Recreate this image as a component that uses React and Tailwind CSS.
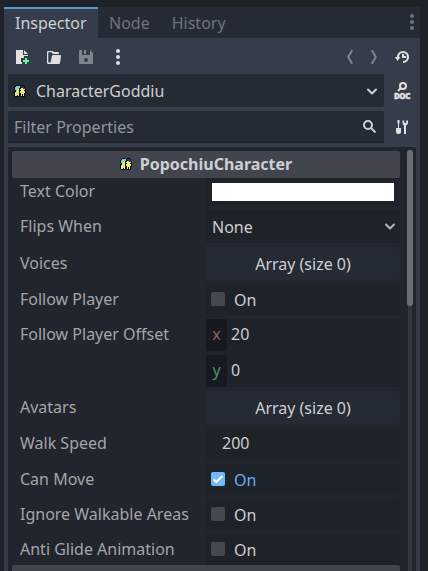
const CHARACTER_PIXELS = [
  "..kkk..kkk..",
  ".kcccckbbbk.",
  "kccccckkbbk.",
  "kcccykkyybbk",
  "kccyykyyyyyk",
  ".kcyykkyyykk",
  "kkyyykyyyyyk",
  "kcyyykyyyyyk",
  "kyycykkyyykk",
  "kyyyykkykyk.",
  "kyykykkykyk.",
  ".kkkk.kkkkk.",
];
const PIXEL_COLORS = { k: "#0b0d12", c: "#76d3cf", y: "#f3ec68", b: "#2a2fa5" };

function CharacterIcon() {
  return (
    <svg width="12" height="12" viewBox="0 0 12 12" shapeRendering="crispEdges" className="shrink-0">
      {CHARACTER_PIXELS.flatMap((line, y) =>
        [...line].map((c, x) =>
          c === "." ? null : <rect key={`${x}-${y}`} x={x} y={y} width="1" height="1" fill={PIXEL_COLORS[c]} />
        )
      )}
    </svg>
  );
}

function Icon({ children, className = "" }) {
  return (
    <svg width="16" height="16" viewBox="0 0 16 16" fill="none" className={`shrink-0 overflow-visible ${className}`}>
      {children}
    </svg>
  );
}

function Chevron({ className = "" }) {
  return (
    <Icon className={className}>
      <path d="M4 6.5 8 10.5 12 6.5" stroke="currentColor" strokeWidth="2" strokeLinecap="round" strokeLinejoin="round" />
    </Icon>
  );
}

function Dots({ className = "" }) {
  return (
    <Icon className={className}>
      <circle cx="8" cy="2" r="2" fill="currentColor" />
      <circle cx="8" cy="8" r="2" fill="currentColor" />
      <circle cx="8" cy="14" r="2" fill="currentColor" />
    </Icon>
  );
}

function Toolbar() {
  return (
    <div className="flex h-9 items-center pt-[2px] pl-[10px] text-[#e0e0e0]">
      <Icon>
        <path d="M2 1v14h6v-2H7v-4h3V7h4V6H9V1zm8 0v4h4z" fill="currentColor" />
        <path d="M11 9h2v2h2v2h-2v2h-2v-2H9v-2h2z" fill="#5fff97" />
      </Icon>
      <Icon className="ml-4">
        <path d="M2 2a1 1 0 0 0-1 1v10.5A1.5 1.5 0 0 0 2.5 15H13a1 1 0 0 0 1-.8L15 7a1 1 0 0 0-1-1H7a1 1 0 0 0-1 .8L4.500 13.500H3a.7.7 0 0 1-.7-.7V3.300H5.500L7 5h6V4a1 1 0 0 0-1-1H8L6.500 2z" fill="currentColor" />
      </Icon>
      <Icon className="ml-4 text-[#7f848d]">
        <path fillRule="evenodd" d="M2 1a1 1 0 0 0-1 1v12a1 1 0 0 0 1 1h12a1 1 0 0 0 1-1V4l-3-3v5H4V1zm4 0v4h2V1zM8 9a2 2 0 1 1 0 4 2 2 0 0 1 0-4z" fill="currentColor" />
      </Icon>
      <Dots className="ml-4" />
      <Icon className="ml-[216px] text-[#828791]">
        <path d="M10.2 1.200 6.200 8l4 6.800" stroke="currentColor" strokeWidth="1.9" />
      </Icon>
      <Icon className="ml-2 text-[#828791]">
        <path d="M5.800 1.200 9.800 8l-4 6.800" stroke="currentColor" strokeWidth="1.9" />
      </Icon>
      <Icon className="ml-3">
        <path d="M4 9V8a5 5 0 1 1 5 5" stroke="currentColor" strokeWidth="2.2" />
        <path d="M.8 8h5.600L3.600 12zM8 5h2v2h2v2H8z" fill="currentColor" />
      </Icon>
    </div>
  );
}

function Label({ children, className = "pt-1" }) {
  return <div className={`w-[194px] shrink-0 pl-2 text-[#a3a5a8] ${className}`}>{children}</div>;
}

function Row({ label, labelClass, className = "", children }) {
  return (
    <div className={`flex shrink-0 ${className}`}>
      <Label className={labelClass}>{label}</Label>
      <div className="flex w-[194px] shrink-0">{children}</div>
    </div>
  );
}

function ArrayRow({ label }) {
  return (
    <Row label={label} labelClass="pt-[5px]" className="h-[33px]">
      <div className="w-full rounded-[2px] bg-[#252b34] pt-[6px] text-center text-[#cdcfd2]">Array (size 0)</div>
    </Row>
  );
}

function CheckRow({ label, checked }) {
  return (
    <Row label={label} className="h-[31px]">
      <div className={`flex w-full rounded-[2px] bg-[#1e2229] pl-[5px] ${checked ? "text-[#68b0f2]" : "text-[#cdcfd2]"}`}>
        <svg width="14" height="14" viewBox="0 0 14 14" className="mt-2 shrink-0">
          <rect width="14" height="14" rx="2" fill={checked ? "#70bafa" : "#45484f"} />
          {checked && <path d="M2.500 7.500 5.300 10 11.300 4" stroke="#fff" strokeWidth="2" fill="none" />}
        </svg>
        <span className="pt-[5px] pl-[9px]">On</span>
      </div>
    </Row>
  );
}

export default function App() {
  return (
    <div className="h-[571px] w-[428px] overflow-hidden bg-[#1e2229] pt-[7px] pl-1 font-['Noto_Sans',sans-serif] text-[16px] leading-[22px] whitespace-nowrap">
      <div className="flex h-[564px] w-[416px] flex-col bg-[#363d4a]">
        <div className="flex h-[31px] shrink-0 rounded-tr-[2px] bg-[#252b34] text-[#70747b]">
          <div className="w-[94px] border-t-2 border-[#5a99cb] bg-[#363d4a] pt-[3px] pl-[11px] text-[#cdcfd2]">Inspector</div>
          <div className="pt-[5px] pl-[11px]">Node</div>
          <div className="pt-[5px] pl-[22px]">History</div>
          <Dots className="mt-[7px] ml-auto" />
        </div>
        <Toolbar />
        <div className="flex h-[33px] shrink-0 pl-1">
          <div className="flex w-[376px] items-center rounded-[2px] bg-[#252b34] pr-1 pl-[6px] text-[#cdcfd2]">
            <CharacterIcon />
            <span className="pl-[10px]">CharacterGoddiu</span>
            <Chevron className="ml-auto" />
          </div>
          <div className="mt-2 ml-[10px] flex w-4 flex-col items-center text-[#e0e0e0]">
            <svg width="16" height="10" viewBox="0 0 16 10" fill="none" className="shrink-0">
              <circle cx="9" cy="4" r="3" stroke="currentColor" strokeWidth="2" />
              <path d="M7 6 4 9" stroke="currentColor" strokeWidth="2" />
            </svg>
            <span className="-mt-[2px] text-[8px] leading-[11px] font-black tracking-[-0.4px] [-webkit-text-stroke:0.4px_#e0e0e0]">
              DOC
            </span>
          </div>
        </div>
        <div className="mt-1 flex h-8 shrink-0 pl-1">
          <div className="flex w-[376px] items-center rounded-t-[2px] border-b-2 border-[#1e2229] bg-[#252b34] px-[6px] text-[#93969b]">
            <span className="pt-px">Filter Properties</span>
            <Icon className="mt-[2px] ml-auto text-[#cdcfd2]">
              <circle cx="6" cy="6" r="4" stroke="currentColor" strokeWidth="2" />
              <path d="m9 9 4.500 4.500" stroke="currentColor" strokeWidth="2" />
            </Icon>
          </div>
          <Icon className="mt-2 ml-[10px] text-[#e0e0e0]">
            <path d="M3.500 1h2v3L5 5v4h2v4a2 2 0 0 1-2 2H4a2 2 0 0 1-2-2V9h2V5l-.5-1z" fill="currentColor" />
            <path d="M8.500 1.500v2.500A3 3 0 0 0 10 6.500V15h2V6.500A3 3 0 0 0 14 4V1.500h-1.800v2.500h-1.900V1.500z" fill="currentColor" />
          </Icon>
        </div>
        <div className="mt-1 ml-1 flex min-h-0 w-[408px] flex-1 overflow-hidden rounded-t-[2px] bg-[#21252e] pl-1">
          <div className="flex w-[388px] shrink-0 flex-col gap-1 overflow-hidden pt-1">
            <div className="flex h-[27px] shrink-0 items-center justify-center rounded-[2px] bg-[#42454d] pb-px font-bold text-[#cdcfd2]">
              <CharacterIcon />
              <span className="pl-2">PopochiuCharacter</span>
            </div>
            <Row label="Text Color" labelClass="pt-[2px]" className="-mt-1 h-[28px]">
              <div className="w-full rounded-b-[2px] bg-[#1e2229] px-[6px] pt-[5px]">
                <div className="h-[18px] bg-white" />
              </div>
            </Row>
            <Row label="Flips When" labelClass="pt-[5px]" className="h-[33px]">
              <div className="flex w-full rounded-[2px] bg-[#1e2229] pr-[2px] pl-[6px] text-[#cdcfd2]">
                <span className="pt-[6px]">None</span>
                <Chevron className="mt-2 ml-auto text-[#b4b6b9]" />
              </div>
            </Row>
            <ArrayRow label="Voices" />
            <CheckRow label="Follow Player" />
            <Row label="Follow Player Offset" className="h-[68px]">
              <div className="flex w-full flex-col gap-1 rounded-[2px] bg-[#1e2229] text-[#cdcfd2]">
                <div className="flex h-8">
                  <span className="w-[21px] rounded-[2px] bg-[#16191f] pt-1 text-center text-[#90655a]">x</span>
                  <span className="pt-1 pl-1">20</span>
                </div>
                <div className="flex h-8">
                  <span className="w-[21px] rounded-[2px] bg-[#16191f] pt-1 text-center text-[#52906b]">y</span>
                  <span className="pt-1 pl-1">0</span>
                </div>
              </div>
            </Row>
            <ArrayRow label="Avatars" />
            <Row label="Walk Speed" className="h-8">
              <div className="w-full rounded-[2px] bg-[#1e2229] pt-1 pl-4 text-[#cdcfd2]">200</div>
            </Row>
            <CheckRow label="Can Move" checked />
            <CheckRow label="Ignore Walkable Areas" />
            <CheckRow label="Anti Glide Animation" />
            <div className="-mt-1 h-[27px] shrink-0 rounded-t-[2px] bg-[#42454d]" />
          </div>
          <div className="ml-[7px] h-full w-[6px] pt-[3px]">
            <div className="mx-px h-full bg-[#33363d]">
              <div className="-mx-px h-[156px] rounded-full bg-[#6c6e73]" />
            </div>
          </div>
        </div>
      </div>
    </div>
  );
}
